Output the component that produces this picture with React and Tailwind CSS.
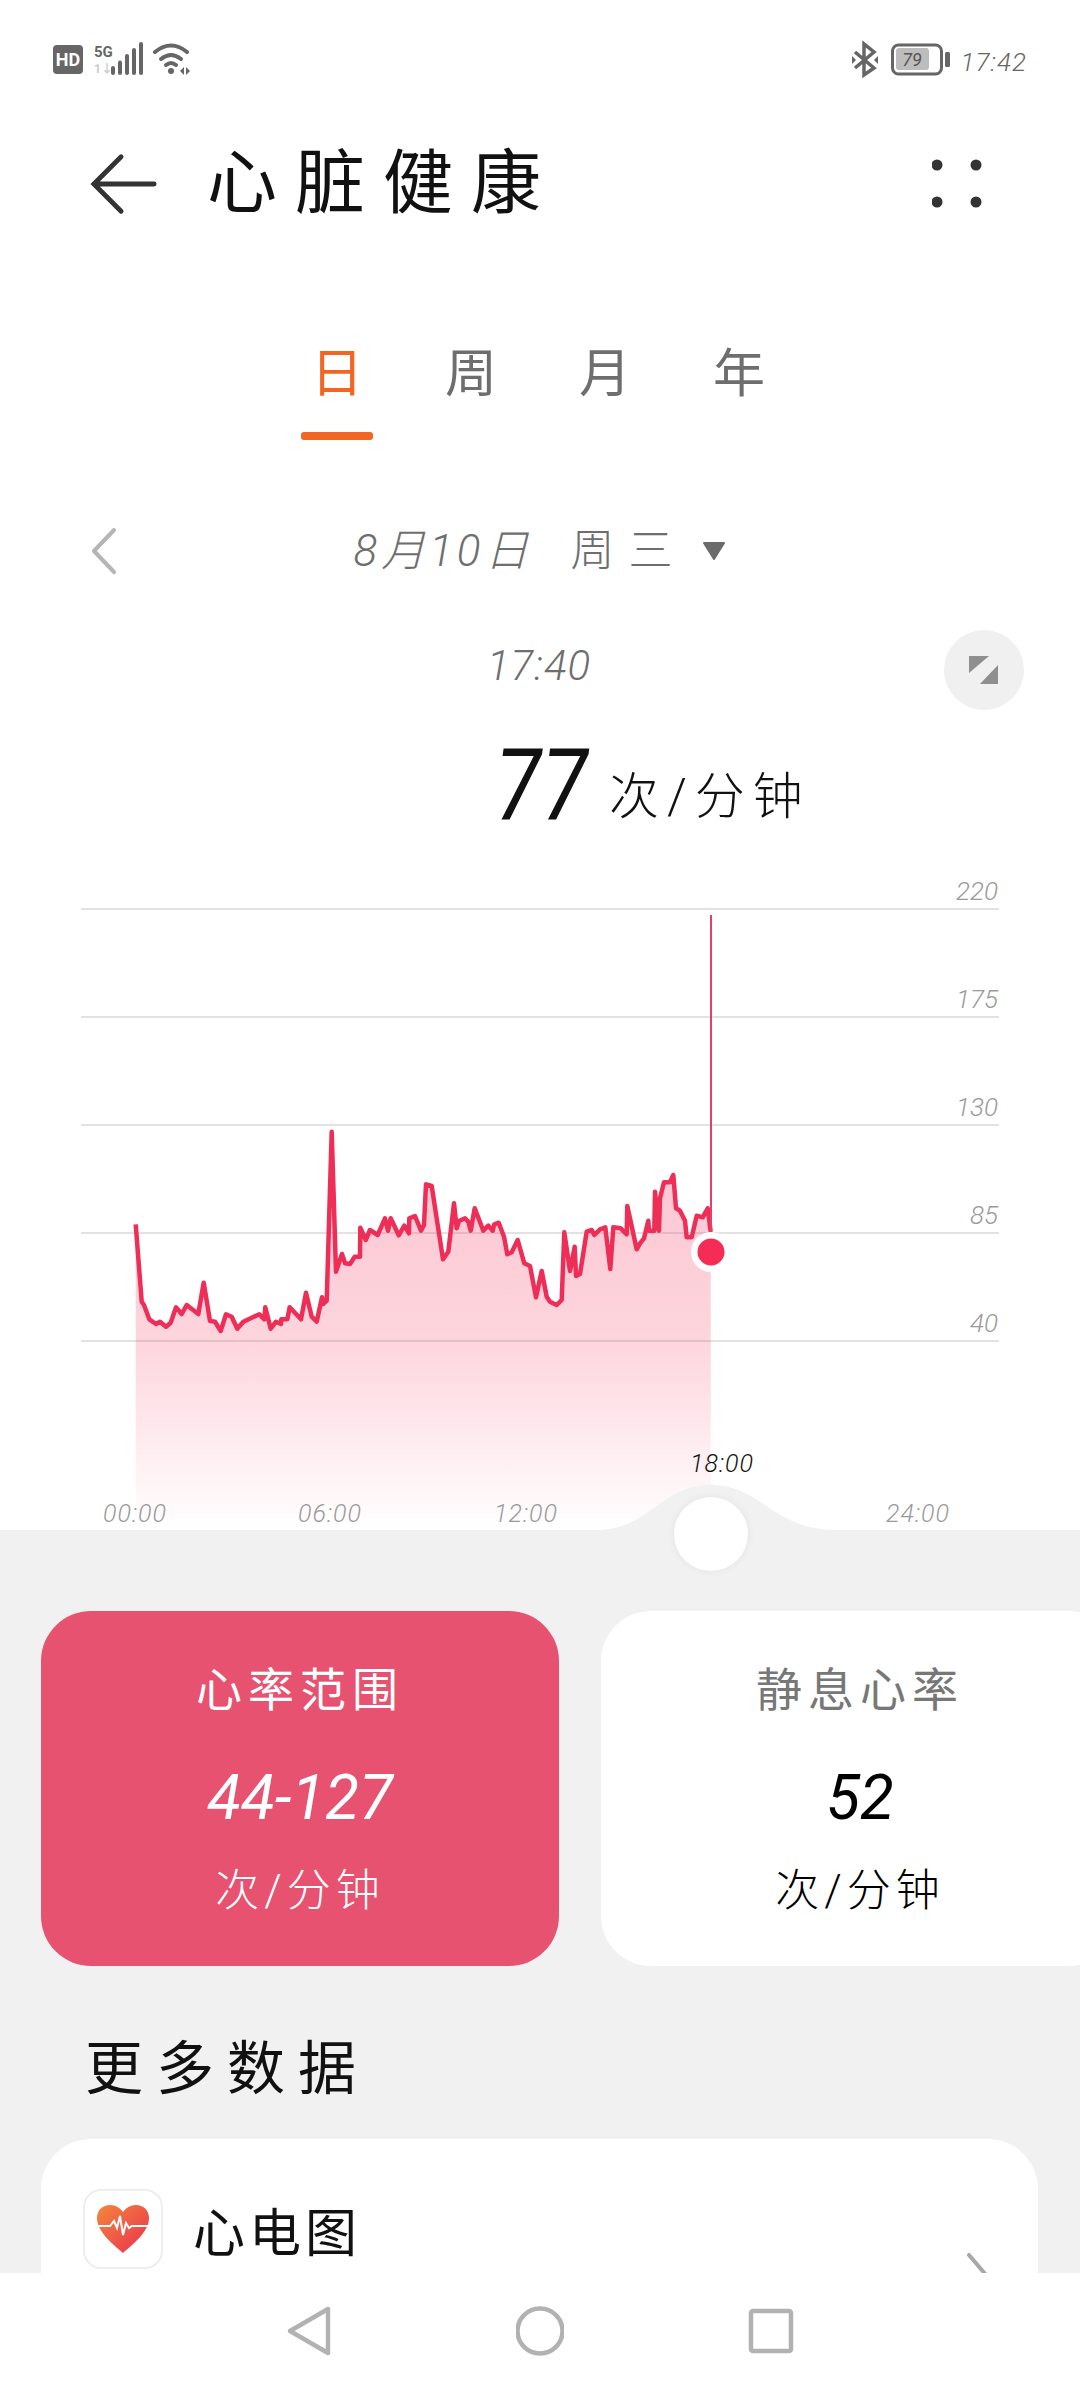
const z3 = [227,1033,245,1265,252,1275,268,1318,288,1332,300,1325,318,1340,332,1328,348,1282,365,1302,380,1275,415,1302,431,1208,450,1323,465,1325,482,1353,498,1303,515,1310,532,1346,550,1325,598,1303,613,1318,616,1282,632,1346,648,1325,663,1332,664,1318,682,1318,689,1282,723,1318,738,1238,755,1310,770,1325,786,1252,790,1272,800,1262,815,755,828,1175,846,1122,855,1150,870,1152,884,1130,900,1130,901,1043,917,1080,930,1050,953,1065,975,1015,984,1052,992,1015,1016,1066,1033,1037,1047,1060,1048,1015,1065,1008,1083,1052,1092,1035,1098,913,1115,918,1149,1138,1165,1115,1182,970,1190,1045,1197,1023,1215,1015,1225,1025,1232,1052,1244,985,1270,1052,1285,1037,1298,1052,1303,1033,1316,1028,1332,1070,1342,1123,1355,1117,1373,1080,1393,1150,1410,1158,1428,1252,1445,1173,1460,1250,1470,1265,1490,1275,1505,1260,1513,1057,1530,1173,1544,1100,1548,1188,1560,1182];
const z4 = [260,395,275,390,283,405,300,388,316,382,331,507,340,382,362,385,380,403,382,318,410,448,420,430,432,415,445,362,447,392,463,392,465,275,477,392,480,295,492,247,510,247,520,225,528,325,540,332,555,362,560,412,575,412,590,347,608,352,623,325,632,395];
const pts = [];
for (let i = 0; i < z3.length; i += 2) pts.push([60 + z3[i] / 3, 880 + z3[i + 1] / 3]);
for (let i = 0; i < z4.length; i += 2) pts.push([500 + z4[i] / 3, 1100 + z4[i + 1] / 3]);
const line = pts.map((p) => `${p[0].toFixed(1)},${p[1].toFixed(1)}`).join(" ");
const area = `${pts[0][0].toFixed(1)},1530 ${line} ${pts[pts.length - 1][0].toFixed(1)},1530`;

const font = "'Roboto','Noto Sans CJK SC',sans-serif";

function StatusLeft() {
  return (
    <svg width="145" height="40" viewBox="50 40 145 40" className="block">
      <rect x="53" y="45" width="30" height="29" rx="4" fill="#666" />
      <text x="68" y="66" textAnchor="middle" fontSize="18" fontWeight="700" fill="#fff" fontFamily={font}>HD</text>
      <text x="94" y="57" fontSize="15" fontWeight="700" fill="#666" fontFamily={font}>5G</text>
      <text x="94" y="73" fontSize="12" fontWeight="700" fill="#ccc" fontFamily={font}>1↓</text>
      {[[113,68],[120,62.5],[127,56],[134,50],[141,44]].map(([x,y]) => (
        <line key={x} x1={x} x2={x} y1={y} y2="73" stroke="#666" strokeWidth="4" strokeLinecap="round" />
      ))}
      <g fill="none" stroke="#666" strokeWidth="4" strokeLinecap="round">
        <path d="M155 52 Q171 39 187 52" />
        <path d="M161 59 Q171 51 181 59" />
        <path d="M166 65 Q171 61 176 65" />
      </g>
      <circle cx="171" cy="71" r="3" fill="#666" />
      <path d="M180 71 L184 67 V75 Z M186 67 V75 L190 71 Z" fill="#666" />
    </svg>
  );
}

function StatusRight() {
  return (
    <svg width="102" height="40" viewBox="854 40 102 40" className="block">
      <polyline points="859,52 878,68 868,75 868,44 878,52 859,68" fill="none" stroke="#666" strokeWidth="3.5" />
      <path d="M856 56 L860 60 L856 64 Z M882 56 L878 60 L882 64 Z" fill="#666" />
      <rect x="896.5" y="45" width="49" height="29" rx="6" fill="none" stroke="#666" strokeWidth="3" />
      <rect x="900" y="48" width="33" height="22" rx="3" fill="#bdbdbd" />
      <text x="916" y="66" textAnchor="middle" fontSize="18" fontStyle="italic" fill="#555" fontFamily={font}>79</text>
      <rect x="949" y="52" width="5" height="15" rx="1.5" fill="#666" />
    </svg>
  );
}

function Dots() {
  return (
    <svg width="50" height="50" viewBox="938 159 50 50" className="block">
      {[[943,165],[982,165],[943,202],[982,202]].map(([x,y]) => <circle key={x + "-" + y} cx={x} cy={y} r="5.5" fill="#333" />)}
    </svg>
  );
}

function Chart() {
  const grid = [[909,"220"],[1017,"175"],[1125,"130"],[1233,"85"],[1341,"40"]];
  const xs = [[135,"00:00"],[330,"06:00"],[526,"12:00"],[918,"24:00"]];
  return (
    <svg width="1080" height="670" viewBox="0 860 1080 670" className="block">
      <defs>
        <linearGradient id="fillG" gradientUnits="userSpaceOnUse" x1="0" x2="0" y1="1130" y2="1530">
          <stop offset="0" stopColor="#f52c55" stopOpacity="0.28" />
          <stop offset="0.52" stopColor="#f52c55" stopOpacity="0.2" />
          <stop offset="1" stopColor="#f52c55" stopOpacity="0" />
        </linearGradient>
      </defs>
      {grid.map(([y, t]) => (
        <g key={t}>
          <line x1="81" x2="999" y1={y} y2={y} stroke="#e2e2e2" strokeWidth="2" />
          <text x="998" y={y - 9} textAnchor="end" fontSize="26" fontStyle="italic" fontWeight="300" fill="#9a9a9a" fontFamily={font}>{t}</text>
        </g>
      ))}
      <polygon points={area} fill="url(#fillG)" />
      <polyline points={line} fill="none" stroke="#ee2e57" strokeWidth="4.5" strokeLinejoin="round" />
      <line x1="711" x2="711" y1="915" y2="1252" stroke="#e0406a" strokeWidth="2" />
      <circle cx="711" cy="1252" r="20" fill="#fff" />
      <circle cx="711" cy="1252" r="13.5" fill="#f52c55" />
      {xs.map(([x, t]) => (
        <text key={t} x={x} y="1522" textAnchor="middle" fontSize="25" fontStyle="italic" fontWeight="300" letterSpacing="1" fill="#9a9a9a" fontFamily={font}>{t}</text>
      ))}
      <text x="722" y="1472" textAnchor="middle" fontSize="25" fontStyle="italic" fontWeight="300" letterSpacing="1" fill="#111" fontFamily={font}>18:00</text>
      <path d="M596 1530 C650 1530 660 1485 711 1485 C762 1485 772 1530 836 1530 Z" fill="#f1f1f1" />
    </svg>
  );
}

function StatCard({ red, title, value }) {
  return (
    <div className={`w-[518px] h-[355px] shrink-0 rounded-[50px] flex flex-col items-center ${red ? "bg-[#e75270] text-white" : "bg-white text-black"}`}>
      <div className={`mt-[52px] h-[54px] leading-[54px] text-[46px] tracking-[6px] ${red ? "text-white" : "text-[#777]"}`}>{title}</div>
      <div className="mt-[50px] h-[62px] leading-[62px] text-[62px] italic font-normal">{value}</div>
      <div className="mt-[36px] h-[52px] leading-[52px] text-[44px] tracking-[5px] font-light">次/分钟</div>
    </div>
  );
}

export default function App() {
  return (
    <div className="relative w-[1080px] h-[2388px] overflow-hidden flex flex-col bg-white font-['Roboto','Noto_Sans_CJK_SC',sans-serif]">
      <div className="h-[120px] shrink-0 flex items-center justify-between pl-[50px] pr-[53px]">
        <StatusLeft />
        <div className="flex items-center gap-[9px]">
          <StatusRight />
          <span className="mt-[5px] text-[26px] italic font-light tracking-[1px] text-[#666]">17:42</span>
        </div>
      </div>

      <div className="h-[128px] shrink-0 flex items-center justify-between pl-[90px] pr-[98px]">
        <div className="flex items-center gap-[49px]">
          <svg width="68" height="62" viewBox="88 153 70 62" className="block">
            <path d="M120 156 L92 184 L120 212 M92 184 H154" fill="none" stroke="#333" strokeWidth="5" strokeLinecap="round" />
          </svg>
          <span className="text-[70px] leading-[80px] tracking-[18px] text-[#111]">心脏健康</span>
        </div>
        <Dots />
      </div>

      <div className="h-[192px] shrink-0 flex justify-center pr-[4px]">
        {["日", "周", "月", "年"].map((t, i) => (
          <div key={t} className="w-[134px] flex flex-col items-center justify-end">
            <span className={`text-[52px] leading-[60px] ${i === 0 ? "text-[#f26522]" : "text-[#6e6e6e]"}`}>{t}</span>
            <div className={`mt-[27px] w-[72px] h-[8px] rounded-[3px] ${i === 0 ? "bg-[#f26522]" : "bg-transparent"}`} />
          </div>
        ))}
      </div>

      <div className="mt-[80px] h-[62px] shrink-0 grid grid-cols-[1fr_auto_1fr] items-center">
        <svg width="30" height="50" viewBox="0 0 30 50" className="block ml-[89px]">
          <polyline points="25,4 5,25 25,46" fill="none" stroke="#b5b5b5" strokeWidth="4" strokeLinecap="round" strokeLinejoin="round" />
        </svg>
        <div className="flex items-center text-[#6e6e6e] text-[44px] leading-[62px] font-light">
          <span className="tracking-[4px] italic">8月10日</span>
          <span className="ml-[38px] tracking-[14px]">周三</span>
          <svg width="26" height="20" viewBox="0 0 26 20" className="block ml-[14px]">
            <path d="M3 2 H23 L13 18 Z" fill="#6b6b6b" stroke="#6b6b6b" strokeWidth="2" strokeLinejoin="round" />
          </svg>
        </div>
        <div />
      </div>

      <div className="mt-[48px] h-[80px] shrink-0 relative flex justify-end pr-[56px]">
        <span className="absolute left-[487px] top-[6px] text-[42px] leading-[60px] italic font-light tracking-[1px] text-[#6e6e6e]">17:40</span>
        <div className="w-[80px] h-[80px] rounded-full bg-[#f0f0f0] flex items-center justify-center">
          <svg width="32" height="32" viewBox="975 655 32 32" className="block">
            <path d="M976 657 H996 L976 674 Z M1005 666 V685 H987 Z" fill="#8f8f8f" />
          </svg>
        </div>
      </div>

      <div className="h-[150px] shrink-0 flex items-start pl-[495px] pt-[16px] text-[#111]">
        <span className="w-[100px] inline-block origin-left scale-x-[0.84] text-[100px] leading-[120px] italic font-normal tracking-[1px]">77</span>
        <span className="ml-[14px] mt-[36px] text-[50px] leading-[70px] font-light tracking-[8px]">次/分钟</span>
      </div>

      <div className="relative h-[670px] shrink-0">
        <Chart />
        <div className="absolute left-[674px] top-[637px] w-[74px] h-[74px] rounded-full bg-white z-10 shadow-[0_0_8px_rgba(0,0,0,0.06)]" />
      </div>

      <div className="flex-1 min-h-0 bg-[#f1f1f1] overflow-hidden">
        <div className="mt-[81px] pl-[41px] flex gap-[42px] w-[1200px]">
          <StatCard red title="心率范围" value="44-127" />
          <StatCard title="静息心率" value="52" />
        </div>
        <div className="mt-[68px] ml-[85px] h-[70px] leading-[70px] text-[58px] tracking-[13px] text-[#111]">更多数据</div>
        <div className="mt-[35px] ml-[41px] mr-[42px] h-[300px] rounded-t-[50px] bg-white flex items-start justify-between pt-[50px] pl-[42px] pr-[42px]">
          <div className="flex items-center">
            <div className="w-[80px] h-[80px] rounded-[18px] border-2 border-[#eeeeee] bg-white flex items-center justify-center">
              <svg width="56" height="50" viewBox="0 0 56 50" className="block">
                <defs>
                  <linearGradient id="heartG" x1="0" y1="0" x2="1" y2="1">
                    <stop offset="0" stopColor="#f5863c" />
                    <stop offset="1" stopColor="#e8304f" />
                  </linearGradient>
                </defs>
                <path d="M28 49 C18 40 2 28 2 14 C2 6 8 1 15 1 C21 1 25 4 28 8 C31 4 35 1 41 1 C48 1 54 6 54 14 C54 28 38 40 28 49 Z" fill="url(#heartG)" />
                <polyline points="1,22 15,22 19,17 22,24 25,12 28,31 31,19 34,24 37,22 55,22" fill="none" stroke="#fff" strokeWidth="2" />
              </svg>
            </div>
            <span className="ml-[30px] mt-[12px] text-[52px] leading-[60px] tracking-[4px] text-[#111]">心电图</span>
          </div>
          <svg width="30" height="60" viewBox="0 0 30 60" className="block mt-[64px]">
            <polyline points="3,2 26,29 3,56" fill="none" stroke="#a8a8a8" strokeWidth="4" strokeLinecap="round" strokeLinejoin="round" />
          </svg>
        </div>
      </div>

      <div className="h-[115px] shrink-0 bg-white flex items-center justify-center gap-[183px]">
        <svg width="48" height="52" viewBox="286 2305 48 52" className="block">
          <path d="M329 2309 V2353 L291 2331 Z" fill="none" stroke="#b2b2b2" strokeWidth="4.5" strokeLinejoin="round" />
        </svg>
        <svg width="48" height="52" viewBox="518 2305 48 52" className="block">
          <circle cx="542" cy="2331" r="22.5" fill="none" stroke="#b2b2b2" strokeWidth="4.5" />
        </svg>
        <svg width="48" height="52" viewBox="749 2305 48 52" className="block">
          <rect x="753" y="2311" width="40" height="40" rx="2" fill="none" stroke="#b2b2b2" strokeWidth="4.5" />
        </svg>
      </div>
    </div>
  );
}
